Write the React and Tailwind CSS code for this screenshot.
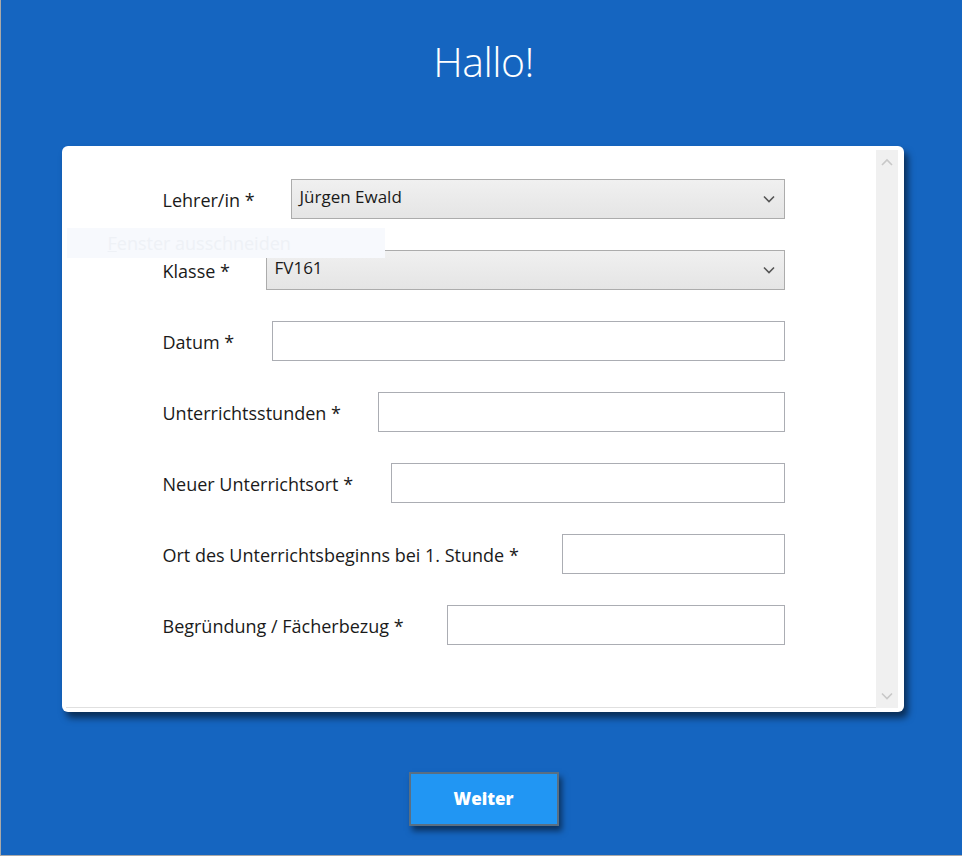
const fields = [
  { label: 'Lehrer/in *', w: 'w-[128px]', type: 'select', value: 'Jürgen Ewald' },
  { label: 'Klasse *', w: 'w-[103px]', type: 'select', value: 'FV161' },
  { label: 'Datum *', w: 'w-[109px]', type: 'text' },
  { label: 'Unterrichtsstunden *', w: 'w-[215px]', type: 'text' },
  { label: 'Neuer Unterrichtsort *', w: 'w-[228px]', type: 'text' },
  { label: 'Ort des Unterrichtsbeginns bei 1. Stunde *', w: 'w-[399px]', type: 'text' },
  { label: 'Begründung / Fächerbezug *', w: 'w-[284px]', type: 'text' },
]

function Chevron({ up, className }) {
  return (
    <svg width="12" height="8" viewBox="0 0 12 8" className={className}>
      <path
        d={up ? 'M1 7 L6 2 L11 7' : 'M1 1.5 L6 6.5 L11 1.5'}
        fill="none"
        stroke="currentColor"
        strokeWidth="1.6"
      />
    </svg>
  )
}

function Field({ label, w, type, value }) {
  return (
    <div className="flex items-center h-[40px]">
      <span className={`${w} shrink-0 text-[18px] text-[#1a1a1a] leading-none pt-[2px]`}>{label}</span>
      {type === 'select' ? (
        <div className="flex-1 h-full flex items-center justify-between pl-[8px] pr-[9px] border border-[#acacac] bg-gradient-to-b from-[#f0f0f0] to-[#e5e5e5]">
          <span className="text-[17px] text-[#1a1a1a] -mt-[4px]">{value}</span>
          <Chevron className="text-[#555]" />
        </div>
      ) : (
        <div className="flex-1 h-full border border-[#abadb3] bg-white" />
      )}
    </div>
  )
}

export default function App() {
  return (
    <div
      className="w-[962px] h-[856px] bg-[#1565c0] border-l border-b border-[#a9a9a9] flex flex-col items-center overflow-hidden"
      style={{ fontFamily: '"Open Sans", "Noto Sans", sans-serif' }}
    >
      <h1 className="pt-[31px] h-[146px] text-[41px] font-light text-white leading-[60px] tracking-[-0.5px] pl-[4px]">
        Hallo!
      </h1>

      <div className="relative w-[842px] h-[566px] ml-[2px] bg-white rounded-[6px] shadow-[4px_6px_7px_rgba(0,0,0,0.55)] p-[4px] flex">
        <div className="flex-1 border-b border-[#e0e0e0] pl-[97px] pr-[91px] pt-[29px] flex flex-col gap-[31px]">
          {fields.map((f) => (
            <Field key={f.label} {...f} />
          ))}
        </div>
        <div className="w-[22px] bg-[#f0f0f0] flex flex-col items-center justify-between py-[8px] mr-[2px]">
          <Chevron up className="text-[#c8c8c8]" />
          <Chevron className="text-[#c8c8c8]" />
        </div>

        <div className="absolute left-[5px] top-[82px] w-[318px] h-[30px] bg-[#f7f9fd] flex items-center pl-[41px]">
          <span className="text-[18px] text-[#eef1f6]">
            <span className="underline">F</span>enster ausschneiden
          </span>
        </div>
      </div>

      <button className="mt-[60px] ml-[4px] w-[150px] h-[54px] bg-[#2196f3] border-2 border-[#5a6f82] shadow-[3px_5px_6px_rgba(0,0,0,0.5)] text-white text-[17px] font-extrabold">
        Weiter
      </button>
    </div>
  )
}
